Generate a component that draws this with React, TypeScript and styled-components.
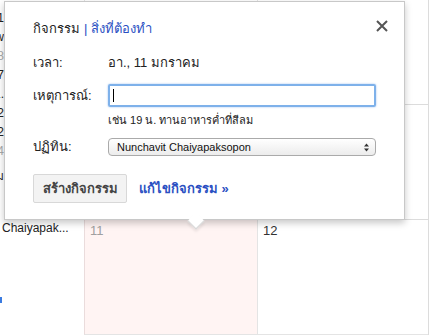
import styled, { createGlobalStyle } from "styled-components";

const GlobalStyle = createGlobalStyle`
  html, body {
    margin: 0;
    padding: 0;
    background: #fff;
  }
  body {
    font-family: "Liberation Sans", Arial, "DejaVu Sans", sans-serif;
    color: #222;
  }
`;

const Page = styled.div`
  position: relative;
  width: 429px;
  height: 335px;
  overflow: hidden;
  background: #fff;
`;

// calendar behind the bubble
const Calendar = styled.div`
  display: grid;
  grid-template-columns: 84px 173px 171px;
  grid-template-rows: 104px 115px 116px;
  width: 429px;
  height: 335px;
  border-right: 1px solid #dcdcdc;
  box-sizing: border-box;
`;
const SideCol = styled.div`
  grid-column: 1;
  grid-row: 1 / 3;
  margin-left: -70px;
  padding-top: 12px;
  display: flex;
  flex-flow: column;
  gap: 6px;
  font-size: 12px;
  line-height: 13px;
  white-space: nowrap;
`;
const SideItem = styled.div<{ muted?: boolean }>`
  width: 74px;
  text-align: right;
  color: ${(p) => (p.muted ? "#aaa" : "#222")};
`;
const Cell = styled.div<{ today?: boolean; line?: boolean }>`
  box-sizing: border-box;
  border-top: ${(p) => (p.line ? "1px solid #dcdcdc" : "none")};
  border-left: 1px solid ${(p) => (p.today ? "#eadcdc" : "#e4e4e4")};
  background: ${(p) => (p.today ? "#fff4f3" : "#fff")};
`;
const DayCell = styled(Cell)`
  padding: 3px 0 0 5px;
  font-size: 13px;
  border-top: 1px solid ${(p) => (p.today ? "#eadcdc" : "#dcdcdc")};
  border-bottom: 1px solid #e4e4e4;
`;
const DayNum = styled.span<{ dim?: boolean }>`
  color: ${(p) => (p.dim ? "#a0a0a0" : "#333")};
`;
const LastRowSide = styled.div`
  padding-top: 2px;
  font-size: 12px;
  white-space: nowrap;
  color: #222;
  span {
    margin-left: 2px;
  }
`;
const BlueTick = styled.div`
  width: 2px;
  height: 6px;
  margin-top: 62px;
  background: #3b7be0;
`;
const GrayTab = styled.div`
  width: 13px;
  height: 2px;
  margin: 38px 0 0 62px;
  background: #bbb;
`;

// bubble
const Bubble = styled.div`
  position: absolute;
  left: 4px;
  top: 1px;
  width: 401px;
  height: 219px;
  box-sizing: border-box;
  background: #fff;
  border: 1px solid #c8c8c8;
  box-shadow: 0 3px 7px rgba(0, 0, 0, 0.22);
  padding: 18px 0 0 28px;
  font-size: 13px;
  &:after {
    content: "";
    position: absolute;
    left: 185px;
    bottom: -8px;
    width: 11px;
    height: 11px;
    background: #fff;
    border-right: 1px solid #d6d6d6;
    border-bottom: 1px solid #d6d6d6;
    transform: rotate(45deg);
    box-shadow: 2px 2px 3px rgba(0, 0, 0, 0.08);
  }
`;
const Tabs = styled.div`
  line-height: 18px;
  color: #222;
  a {
    color: #2a4fc2;
    text-decoration: none;
  }
  i {
    font-style: normal;
    color: #2a4fc2;
    margin: 0 4px;
  }
`;
const Close = styled.button`
  position: absolute;
  right: 14px;
  top: 16px;
  border: none;
  background: none;
  padding: 0;
  width: 16px;
  height: 16px;
  cursor: pointer;
`;
const Form = styled.div`
  display: grid;
  grid-template-columns: 75px 268px;
  align-items: center;
  margin-top: 16px;
`;
const Label = styled.div<{ gap?: number }>`
  line-height: 18px;
  color: #222;
  margin-top: ${(p) => p.gap ?? 0}px;
`;
const Value = styled.div`
  line-height: 18px;
  color: #222;
`;
const Input = styled.div`
  height: 23px;
  box-sizing: border-box;
  border: 2px solid #7eb1ea;
  border-radius: 2px;
  box-shadow: 0 0 2px rgba(78, 144, 230, 0.6);
  margin-top: 12px;
  padding: 3px 0 0 3px;
  span {
    display: block;
    width: 1px;
    height: 13px;
    background: #000;
  }
`;
const Hint = styled.div`
  grid-column: 2;
  font-size: 11px;
  line-height: 14px;
  margin-top: 6px;
  color: #222;
`;
const Select = styled.div`
  height: 18px;
  box-sizing: border-box;
  border: 1px solid #aaa;
  border-radius: 4px;
  background: linear-gradient(#fff, #ececec);
  display: flex;
  align-items: center;
  justify-content: space-between;
  padding: 0 6px 0 8px;
  font-size: 11px;
  color: #111;
  margin-top: 11px;
`;
const Arrows = styled.svg`
  width: 5px;
  height: 9px;
`;
const Actions = styled.div`
  display: flex;
  align-items: center;
  gap: 12px;
  margin-top: 18px;
`;
const Button = styled.button`
  height: 29px;
  width: 94px;
  border: 1px solid #d8d8d8;
  border-radius: 2px;
  background: #f3f3f3;
  color: #444;
  font-family: inherit;
  font-size: 13px;
  font-weight: bold;
  padding: 0;
`;
const EditLink = styled.a`
  color: #2a4fc2;
  font-weight: bold;
  text-decoration: none;
`;

const sideItems: { t: string; muted?: boolean }[] = [
  { t: "11" },
  { t: "ww" },
  { t: "18", muted: true },
  { t: "17" },
  { t: "1." },
  { t: "12" },
  { t: "22" },
  { t: "14", muted: true },
  { t: "" },
  { t: "มม" },
];

export default function App() {
  return (
    <Page>
      <GlobalStyle />
      <Calendar>
        <SideCol>
          {sideItems.map((s, i) => (
            <SideItem key={i} muted={s.muted}>
              {s.t}
            </SideItem>
          ))}
        </SideCol>
        <Cell />
        <Cell />
        <Cell />
        <Cell line />
        <LastRowSide>
          <span>Chaiyapak...</span>
          <BlueTick />
          <GrayTab />
        </LastRowSide>
        <DayCell today>
          <DayNum dim>11</DayNum>
        </DayCell>
        <DayCell>
          <DayNum>12</DayNum>
        </DayCell>
      </Calendar>

      <Bubble>
        <Tabs>
          กิจกรรม<i>|</i>
          <a href="#">สิ่งที่ต้องทำ</a>
        </Tabs>
        <Close aria-label="close">
          <svg width="16" height="16" viewBox="0 0 16 16">
            <path d="M3 3 L13 13 M13 3 L3 13" stroke="#555" strokeWidth="2" />
          </svg>
        </Close>
        <Form>
          <Label>เวลา:</Label>
          <Value>อา., 11 มกราคม</Value>
          <Label gap={12}>เหตุการณ์:</Label>
          <Input>
            <span />
          </Input>
          <Hint>เช่น 19 น. ทานอาหารค่ำที่สีลม</Hint>
          <Label gap={11}>ปฏิทิน:</Label>
          <Select>
            Nunchavit Chaiyapaksopon
            <Arrows viewBox="0 0 5 9">
              <path d="M0 3.5 L2.5 0.5 L5 3.5 Z M0 5.5 L2.5 8.5 L5 5.5 Z" fill="#333" />
            </Arrows>
          </Select>
        </Form>
        <Actions>
          <Button>สร้างกิจกรรม</Button>
          <EditLink href="#">แก้ไขกิจกรรม »</EditLink>
        </Actions>
      </Bubble>
    </Page>
  );
}
